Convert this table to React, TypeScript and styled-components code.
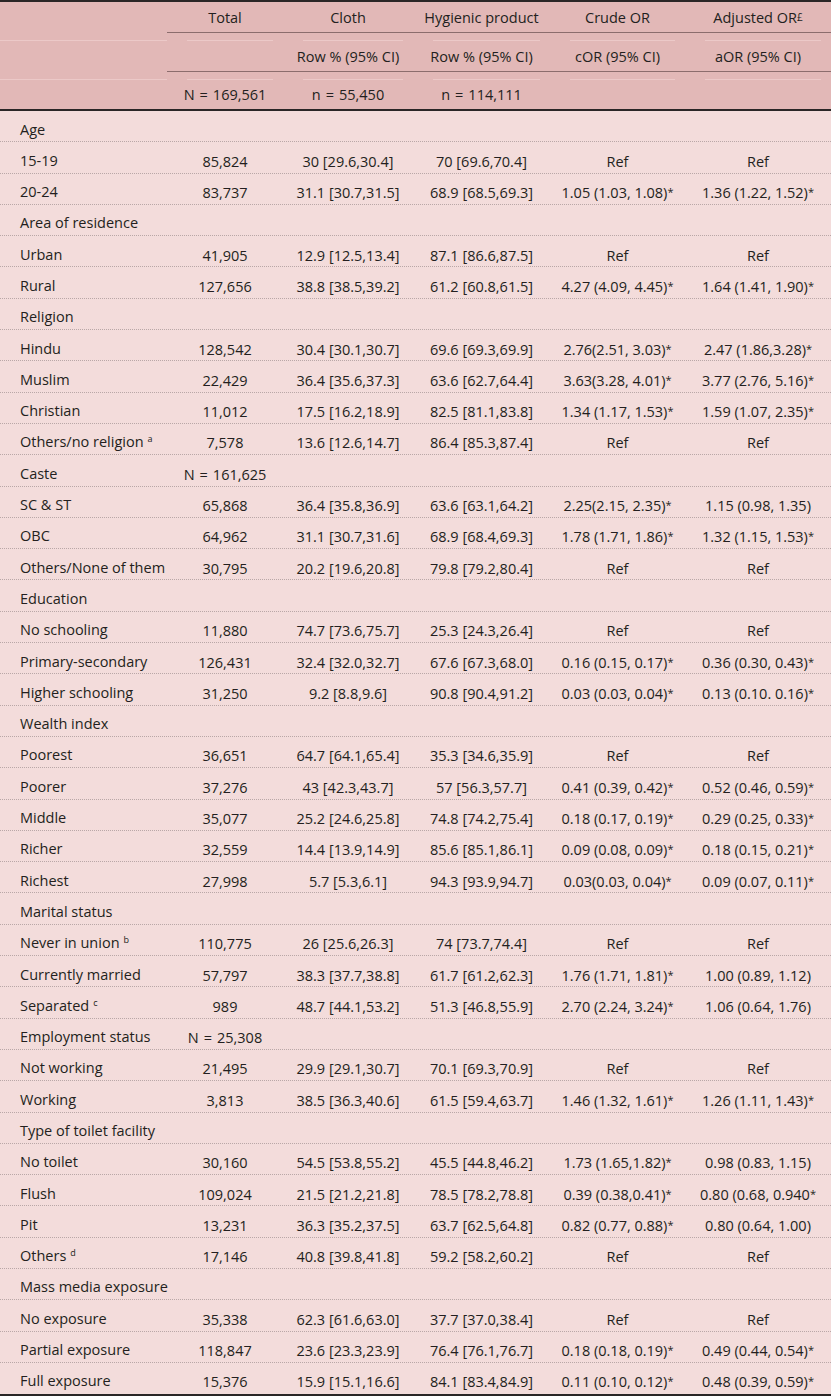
import React from "react";
import styled, { createGlobalStyle } from "styled-components";

const COLS = "167px 116px 130px 137px 135px 1fr";

const GlobalStyle = createGlobalStyle`
  html, body { margin: 0; padding: 0; background: #ffffff; }
  body {
    font-family: "Open Sans", "Noto Sans", "Liberation Sans", sans-serif;
    font-size: 14.5px;
    color: #231f20;
  }
`;

const Table = styled.div`
  width: 831px;
  background: #f3dcdb;
`;

const Head = styled.div`
  background: #e2b8b7;
  border-top: 2px solid #2a2626;
  border-bottom: 2px solid #2a2626;
`;

const HeadRow = styled.div`
  display: grid;
  grid-template-columns: ${COLS};
`;

const HeadCell = styled.div`
  display: flex;
  flex-direction: column;
`;

const HeadText = styled.div<{ $rule?: boolean; $h: number }>`
  height: ${(p) => p.$h}px;
  display: flex;
  align-items: center;
  justify-content: center;
  white-space: nowrap;
  border-bottom: ${(p) => (p.$rule ? "1px solid #8c6d6d" : "1px solid transparent")};
`;

const HeadGap = styled.div<{ $inset?: boolean }>`
  height: 7px;
  border-bottom: 1px solid #ecc9c8;
  margin: ${(p) => (p.$inset ? "0 10px 0 20px" : "0")};
`;

const Body = styled.div`
  border-bottom: 2px solid #2a2626;
`;

const Row = styled.div<{ $last?: boolean }>`
  display: grid;
  grid-template-columns: ${COLS};
  box-sizing: border-box;
  height: ${(p) => (p.$last ? "31px" : "31.3px")};
  border-bottom: ${(p) => (p.$last ? "none" : "1px dotted #b9a7a7")};
`;

const Cell = styled.div<{ $label?: boolean }>`
  padding-top: ${(p) => (p.$label ? "6.5px" : "7.5px")};
  line-height: 24px;
  white-space: nowrap;
  text-align: ${(p) => (p.$label ? "left" : "center")};
  padding-left: ${(p) => (p.$label ? "20px" : "0")};
`;

const Sup = styled.sup`
  font-size: 9px;
  line-height: 0;
  vertical-align: 5px;
  margin-left: 4px;
`;

const Pound = styled.sup`
  font-size: 10px;
  line-height: 0;
  vertical-align: 5px;
`;

const Star = styled.span`
  font-size: 11px;
  vertical-align: 2px;
  line-height: 0;
`;

const Eq = styled.span`
  margin: 0 5px;
`;

type DataRow = {
  label: string;
  sup?: string;
  n?: string;
  vals?: [string, string, string, string, string];
};

const rows: DataRow[] = [
  { label: "Age" },
  { label: "15-19", vals: ["85,824", "30 [29.6,30.4]", "70 [69.6,70.4]", "Ref", "Ref"] },
  { label: "20-24", vals: ["83,737", "31.1 [30.7,31.5]", "68.9 [68.5,69.3]", "1.05 (1.03, 1.08)*", "1.36 (1.22, 1.52)*"] },
  { label: "Area of residence" },
  { label: "Urban", vals: ["41,905", "12.9 [12.5,13.4]", "87.1 [86.6,87.5]", "Ref", "Ref"] },
  { label: "Rural", vals: ["127,656", "38.8 [38.5,39.2]", "61.2 [60.8,61.5]", "4.27 (4.09, 4.45)*", "1.64 (1.41, 1.90)*"] },
  { label: "Religion" },
  { label: "Hindu", vals: ["128,542", "30.4 [30.1,30.7]", "69.6 [69.3,69.9]", "2.76(2.51, 3.03)*", "2.47 (1.86,3.28)*"] },
  { label: "Muslim", vals: ["22,429", "36.4 [35.6,37.3]", "63.6 [62.7,64.4]", "3.63(3.28, 4.01)*", "3.77 (2.76, 5.16)*"] },
  { label: "Christian", vals: ["11,012", "17.5 [16.2,18.9]", "82.5 [81.1,83.8]", "1.34 (1.17, 1.53)*", "1.59 (1.07, 2.35)*"] },
  { label: "Others/no religion", sup: "a", vals: ["7,578", "13.6 [12.6,14.7]", "86.4 [85.3,87.4]", "Ref", "Ref"] },
  { label: "Caste", n: "161,625" },
  { label: "SC & ST", vals: ["65,868", "36.4 [35.8,36.9]", "63.6 [63.1,64.2]", "2.25(2.15, 2.35)*", "1.15 (0.98, 1.35)"] },
  { label: "OBC", vals: ["64,962", "31.1 [30.7,31.6]", "68.9 [68.4,69.3]", "1.78 (1.71, 1.86)*", "1.32 (1.15, 1.53)*"] },
  { label: "Others/None of them", vals: ["30,795", "20.2 [19.6,20.8]", "79.8 [79.2,80.4]", "Ref", "Ref"] },
  { label: "Education" },
  { label: "No schooling", vals: ["11,880", "74.7 [73.6,75.7]", "25.3 [24.3,26.4]", "Ref", "Ref"] },
  { label: "Primary-secondary", vals: ["126,431", "32.4 [32.0,32.7]", "67.6 [67.3,68.0]", "0.16 (0.15, 0.17)*", "0.36 (0.30, 0.43)*"] },
  { label: "Higher schooling", vals: ["31,250", "9.2 [8.8,9.6]", "90.8 [90.4,91.2]", "0.03 (0.03, 0.04)*", "0.13 (0.10. 0.16)*"] },
  { label: "Wealth index" },
  { label: "Poorest", vals: ["36,651", "64.7 [64.1,65.4]", "35.3 [34.6,35.9]", "Ref", "Ref"] },
  { label: "Poorer", vals: ["37,276", "43 [42.3,43.7]", "57 [56.3,57.7]", "0.41 (0.39, 0.42)*", "0.52 (0.46, 0.59)*"] },
  { label: "Middle", vals: ["35,077", "25.2 [24.6,25.8]", "74.8 [74.2,75.4]", "0.18 (0.17, 0.19)*", "0.29 (0.25, 0.33)*"] },
  { label: "Richer", vals: ["32,559", "14.4 [13.9,14.9]", "85.6 [85.1,86.1]", "0.09 (0.08, 0.09)*", "0.18 (0.15, 0.21)*"] },
  { label: "Richest", vals: ["27,998", "5.7 [5.3,6.1]", "94.3 [93.9,94.7]", "0.03(0.03, 0.04)*", "0.09 (0.07, 0.11)*"] },
  { label: "Marital status" },
  { label: "Never in union", sup: "b", vals: ["110,775", "26 [25.6,26.3]", "74 [73.7,74.4]", "Ref", "Ref"] },
  { label: "Currently married", vals: ["57,797", "38.3 [37.7,38.8]", "61.7 [61.2,62.3]", "1.76 (1.71, 1.81)*", "1.00 (0.89, 1.12)"] },
  { label: "Separated", sup: "c", vals: ["989", "48.7 [44.1,53.2]", "51.3 [46.8,55.9]", "2.70 (2.24, 3.24)*", "1.06 (0.64, 1.76)"] },
  { label: "Employment status", n: "25,308" },
  { label: "Not working", vals: ["21,495", "29.9 [29.1,30.7]", "70.1 [69.3,70.9]", "Ref", "Ref"] },
  { label: "Working", vals: ["3,813", "38.5 [36.3,40.6]", "61.5 [59.4,63.7]", "1.46 (1.32, 1.61)*", "1.26 (1.11, 1.43)*"] },
  { label: "Type of toilet facility" },
  { label: "No toilet", vals: ["30,160", "54.5 [53.8,55.2]", "45.5 [44.8,46.2]", "1.73 (1.65,1.82)*", "0.98 (0.83, 1.15)"] },
  { label: "Flush", vals: ["109,024", "21.5 [21.2,21.8]", "78.5 [78.2,78.8]", "0.39 (0.38,0.41)*", "0.80 (0.68, 0.940*"] },
  { label: "Pit", vals: ["13,231", "36.3 [35.2,37.5]", "63.7 [62.5,64.8]", "0.82 (0.77, 0.88)*", "0.80 (0.64, 1.00)"] },
  { label: "Others", sup: "d", vals: ["17,146", "40.8 [39.8,41.8]", "59.2 [58.2,60.2]", "Ref", "Ref"] },
  { label: "Mass media exposure" },
  { label: "No exposure", vals: ["35,338", "62.3 [61.6,63.0]", "37.7 [37.0,38.4]", "Ref", "Ref"] },
  { label: "Partial exposure", vals: ["118,847", "23.6 [23.3,23.9]", "76.4 [76.1,76.7]", "0.18 (0.18, 0.19)*", "0.49 (0.44, 0.54)*"] },
  { label: "Full exposure", vals: ["15,376", "15.9 [15.1,16.6]", "84.1 [83.4,84.9]", "0.11 (0.10, 0.12)*", "0.48 (0.39, 0.59)*"] },
];

const renderValue = (v: string) =>
  v.endsWith("*") ? (
    <>
      {v.slice(0, -1)}
      <Star>*</Star>
    </>
  ) : (
    v
  );

const Count = ({ sym, value }: { sym: string; value: string }) => (
  <>
    {sym}
    <Eq>=</Eq>
    {value}
  </>
);

type HeadDef = { cells: React.ReactNode[]; rule: boolean; h: number; gap: boolean };

const headRows: HeadDef[] = [
  {
    cells: ["", "Total", "Cloth", "Hygienic product", "Crude OR", <>Adjusted OR<Pound>£</Pound></>],
    rule: true,
    h: 30,
    gap: true,
  },
  {
    cells: ["", "", "Row % (95% CI)", "Row % (95% CI)", "cOR (95% CI)", "aOR (95% CI)"],
    rule: true,
    h: 30,
    gap: true,
  },
  {
    cells: [
      "",
      <Count sym="N" value="169,561" />,
      <Count sym="n" value="55,450" />,
      <Count sym="n" value="114,111" />,
      "",
      "",
    ],
    rule: false,
    h: 28,
    gap: false,
  },
];

export default function App() {
  return (
    <>
      <GlobalStyle />
      <Table>
        <Head>
          {headRows.map((hr, ri) => (
            <HeadRow key={ri}>
              {hr.cells.map((c, ci) => (
                <HeadCell key={ci}>
                  <HeadText $h={hr.h} $rule={hr.rule && ci > 0}>
                    {c}
                  </HeadText>
                  {hr.gap && <HeadGap $inset={ci > 0} />}
                </HeadCell>
              ))}
            </HeadRow>
          ))}
        </Head>
        <Body>
          {rows.map((r, i) => (
            <Row key={i} $last={i === rows.length - 1}>
              <Cell $label>
                {r.label}
                {r.sup && <Sup>{r.sup}</Sup>}
              </Cell>
              {r.vals ? (
                r.vals.map((v, vi) => <Cell key={vi}>{renderValue(v)}</Cell>)
              ) : (
                <>
                  <Cell>{r.n ? <Count sym="N" value={r.n} /> : ""}</Cell>
                  <Cell />
                  <Cell />
                  <Cell />
                  <Cell />
                </>
              )}
            </Row>
          ))}
        </Body>
      </Table>
    </>
  );
}
